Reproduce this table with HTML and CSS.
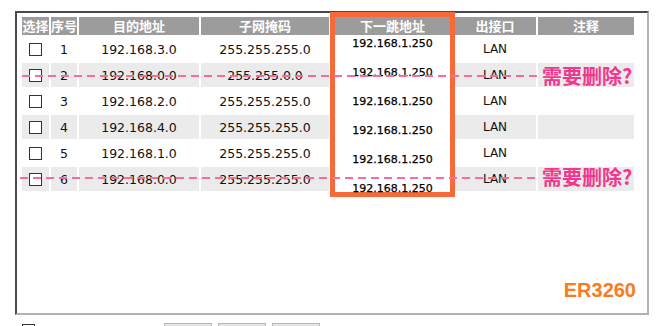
FILE: index.html
```html
<!DOCTYPE html>
<html lang="zh-CN">
<head>
<meta charset="utf-8">
<title>静态路由列表</title>
<link rel="stylesheet" href="styles.css">
</head>
<body>
<div class="panel">
  <div class="grid">
    <div class="th">选择</div>
    <div class="th">序号</div>
    <div class="th">目的地址</div>
    <div class="th">子网掩码</div>
    <div class="th">下一跳地址</div>
    <div class="th">出接口</div>
    <div class="th">注释</div>

    <div class="td"><span class="cb"></span></div><div class="td">1</div><div class="td">192.168.3.0</div><div class="td">255.255.255.0</div><div class="td"></div><div class="td lan">LAN</div><div class="td"></div>
    <div class="td alt"><span class="cb"></span></div><div class="td alt">2</div><div class="td alt">192.168.0.0</div><div class="td alt">255.255.0.0</div><div class="td alt"></div><div class="td alt lan">LAN</div><div class="td alt"></div>
    <div class="td"><span class="cb"></span></div><div class="td">3</div><div class="td">192.168.2.0</div><div class="td">255.255.255.0</div><div class="td"></div><div class="td lan">LAN</div><div class="td"></div>
    <div class="td alt"><span class="cb"></span></div><div class="td alt">4</div><div class="td alt">192.168.4.0</div><div class="td alt">255.255.255.0</div><div class="td alt"></div><div class="td alt lan">LAN</div><div class="td alt"></div>
    <div class="td"><span class="cb"></span></div><div class="td">5</div><div class="td">192.168.1.0</div><div class="td">255.255.255.0</div><div class="td"></div><div class="td lan">LAN</div><div class="td"></div>
    <div class="td alt"><span class="cb"></span></div><div class="td alt">6</div><div class="td alt">192.168.0.0</div><div class="td alt">255.255.255.0</div><div class="td alt"></div><div class="td alt lan">LAN</div><div class="td alt"></div>
  </div>

  <div class="hop-box">
    <div class="hop-head">下一跳地址</div>
    <div class="hop-list">
      <div class="hop">192.168.1.250</div>
      <div class="hop">192.168.1.250</div>
      <div class="hop">192.168.1.250</div>
      <div class="hop">192.168.1.250</div>
      <div class="hop">192.168.1.250</div>
      <div class="hop">192.168.1.250</div>
    </div>
  </div>

  <div class="dash dash-a"></div>
  <div class="dash dash-b"></div>
  <div class="note note-a">需要删除?</div>
  <div class="note note-b">需要删除?</div>

  <div class="model">ER3260</div>
</div>

<div class="footer">
  <span class="cb foot-cb"></span>
  <div class="btns">
    <span class="btn"></span>
    <span class="btn"></span>
    <span class="btn"></span>
  </div>
</div>
</body>
</html>
```

FILE: styles.css
```css
* { box-sizing: border-box; }

html, body {
  margin: 0;
  padding: 0;
  background: #fff;
  overflow: hidden;
}

body {
  font-family: "DejaVu Sans", "Noto Sans CJK SC", sans-serif;
  font-size: 12.5px;
  color: #111;
}

.panel {
  position: relative;
  margin: 11px 0 0 15px;
  width: 634px;
  height: 304px;
  border-style: solid;
  border-width: 2px;
  border-color: #4a4a4a #b2b2b2 #b2b2b2 #4a4a4a;
  padding: 4px 11px 13px 5px;
  display: flex;
  flex-direction: column;
}

.grid {
  display: grid;
  grid-template-columns: 27px 26px 120px 128px 121px 82px 96px;
  grid-template-rows: 18px repeat(6, 24px);
  gap: 2px;
}

.th {
  background: #9c9c9c;
  color: #fff;
  font-family: "Noto Sans CJK SC", sans-serif;
  font-weight: bold;
  font-size: 13px;
  line-height: 18px;
  text-align: center;
  white-space: nowrap;
}

.td {
  display: flex;
  align-items: center;
  justify-content: center;
  white-space: nowrap;
}

.alt { background: #ebebeb; }

.lan { font-size: 12px; }

.cb {
  display: inline-block;
  width: 13px;
  height: 13px;
  border: 1px solid #333;
  background: #fff;
}

.hop-box {
  position: absolute;
  left: 313px;
  top: -1px;
  width: 125px;
  height: 185px;
  border: 5px solid #f66a3a;
  background: #fff;
}

.hop-head {
  height: 18px;
  background: #9c9c9c;
  color: #fff;
  font-family: "Noto Sans CJK SC", sans-serif;
  font-weight: bold;
  font-size: 13px;
  line-height: 18px;
  text-align: center;
}

.hop-list {
  margin-top: 1px;
  display: flex;
  flex-direction: column;
  gap: 13px;
}

.hop {
  font-size: 11px;
  line-height: 16px;
  text-align: center;
  color: #000;
  -webkit-text-stroke: 0.25px #000;
  position: relative;
}

.dash {
  position: absolute;
  left: 5px;
  width: 518px;
  height: 2px;
  background: repeating-linear-gradient(90deg, #f56d9f 0 8px, transparent 8px 13px);
  z-index: 2;
}
.dash-a { top: 62px; }
.dash-b { top: 164px; left: 3px; width: 520px; }

.note {
  position: absolute;
  left: 525px;
  font-family: "Noto Sans CJK SC", sans-serif;
  font-weight: bold;
  font-size: 20px;
  line-height: 20px;
  color: #f2378d;
  white-space: nowrap;
  z-index: 2;
}
.note-a { top: 53px; }
.note-b { top: 154px; }

.model {
  margin-top: auto;
  align-self: flex-end;
  font-family: "Liberation Sans", Arial, sans-serif;
  font-weight: bold;
  font-size: 20px;
  line-height: 20px;
  color: #fb7a1e;
}

.footer {
  display: flex;
  align-items: flex-start;
  padding-left: 22px;
  margin-top: 8px;
}

.foot-cb { margin-top: 1px; }

.btns {
  display: flex;
  gap: 6px;
  margin-left: 129px;
}

.btn {
  display: inline-block;
  width: 48px;
  height: 22px;
  border: 1px solid #b8b8b8;
  background: #e4e4e4;
}
```
